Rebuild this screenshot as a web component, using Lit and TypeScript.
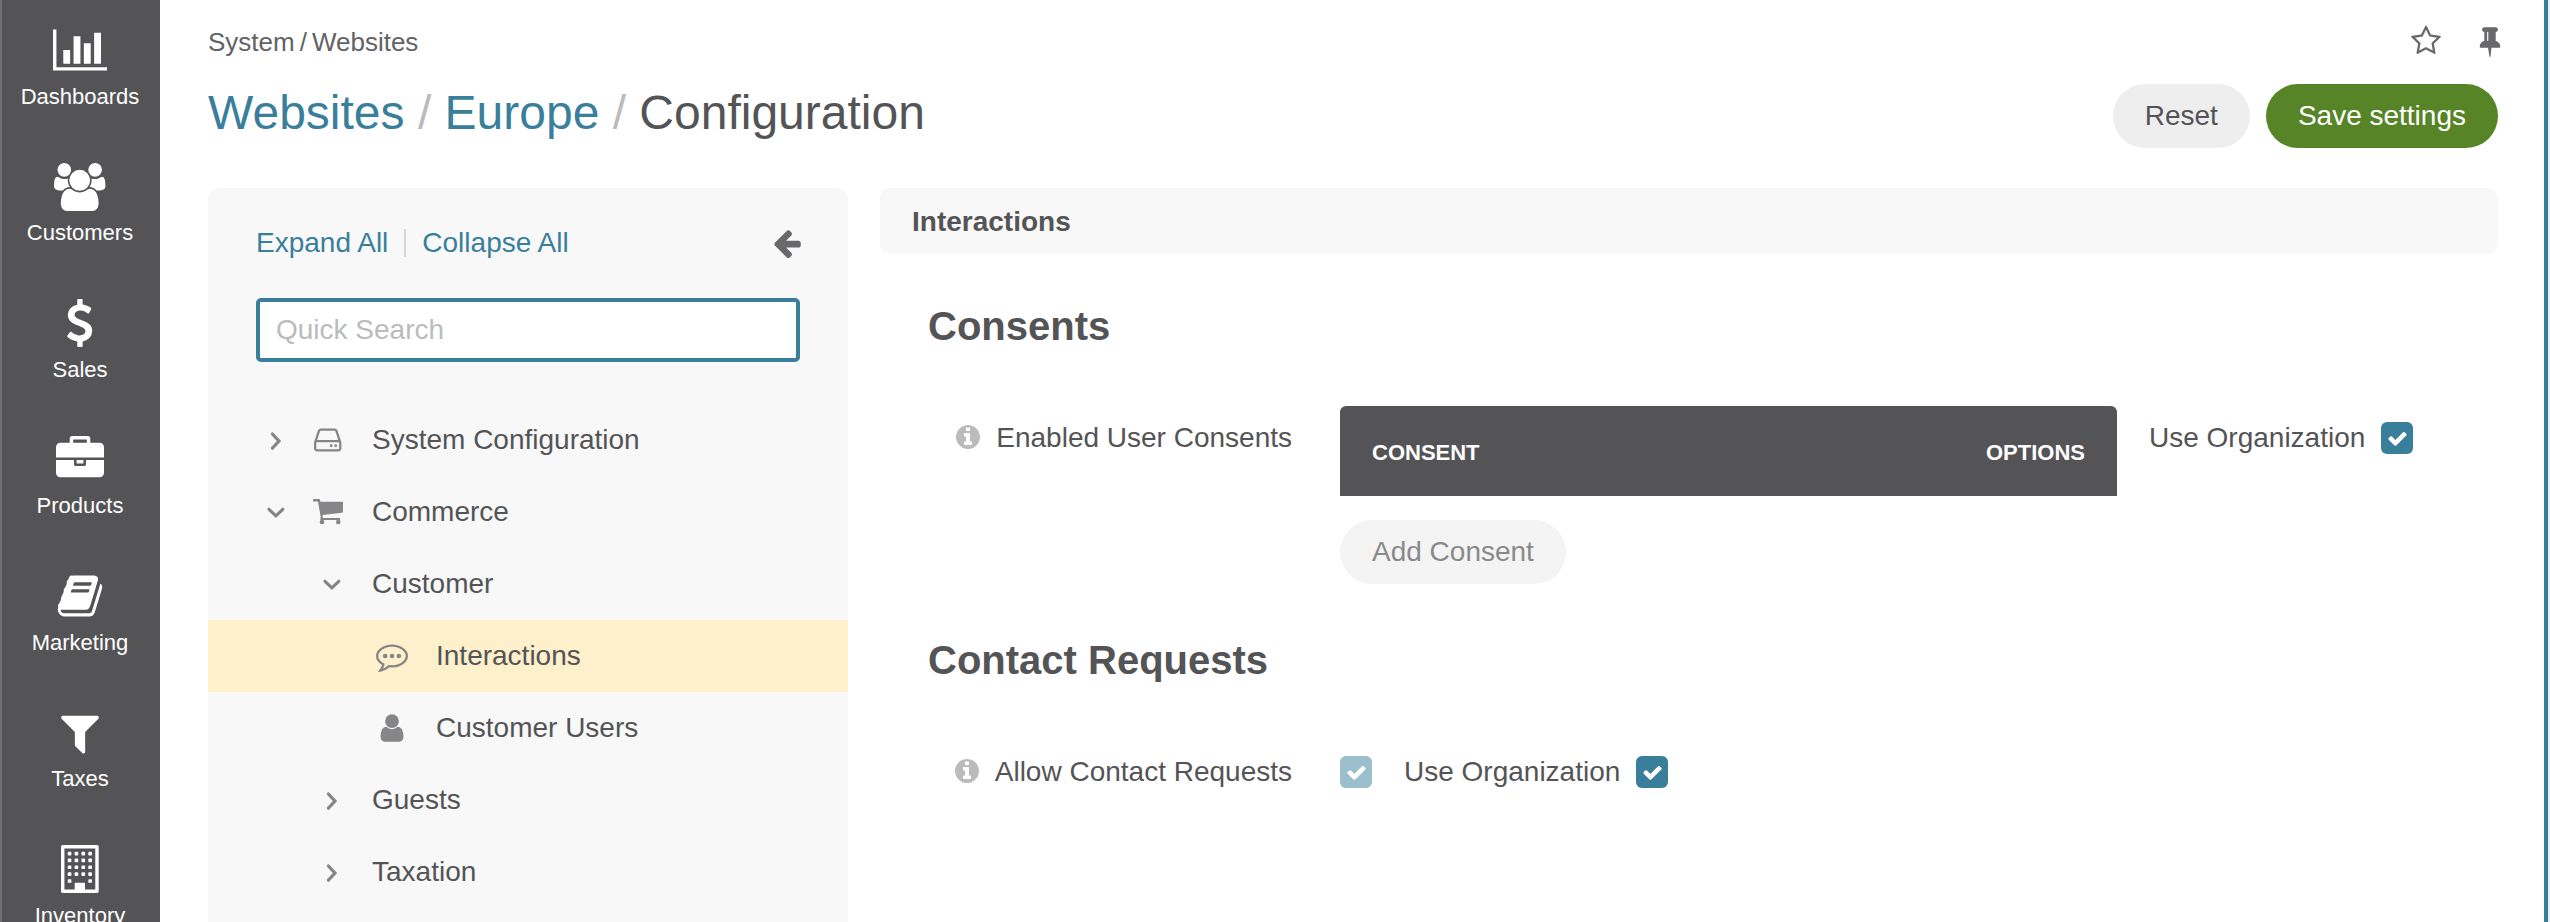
import { LitElement, html, css, svg } from "lit";
import { customElement, property } from "lit/decorators.js";
import { classMap } from "lit/directives/class-map.js";

const windows = [0, 1, 2, 3, 4].flatMap((r) =>
  [0, 1, 2, 3]
    .filter((c) => r < 4 || c === 0 || c === 3)
    .map((c) => svg`<rect x=${252 + c * 256} y=${252 + r * 256} width="136" height="136" rx="34"/>`)
);

// Each glyph: [viewBox width, viewBox height, content]; 1792 units equal one em.
const glyphs: Record<string, [number, number, unknown]> = {
  chart: [2048, 1792, svg`<path d="M640 896v512h-256v-512h256zm384-512v1024h-256v-1024h256zm1024 1152v128h-2048v-1536h128v1408h1920zm-640-896v768h-256v-768h256zm384-384v1152h-256v-1152h256z"/>`],
  users: [1920, 1792, svg`<circle cx="384" cy="256" r="256"/><circle cx="1536" cy="256" r="256"/><circle cx="960" cy="646" r="390"/><path d="M593 896q-162 5-265 128h-134q-82 0-138-40.500t-56-118.500q0-353 124-353 6 0 43.500 21t97.500 42.500 119 21.500q67 0 133-23-5 37-5 66 0 139 81 256z"/><path d="M1664 1533q0 120-73 189.500t-194 69.500h-874q-121 0-194-69.500t-73-189.500q0-53 3.500-103.500t14-109 26.500-108.500 43-97.500 62-81 85.500-53.500 111.500-20q10 0 43 21.500t73 48 107 48 135 21.500 135-21.500 107-48 73-48 43-21.500q61 0 111.500 20t85.500 53.500 62 81 43 97.500 26.500 108.500 14 109 3.500 103.500z"/><path d="M1920 865q0 78-56 118.500t-138 40.500h-134q-103-123-265-128 81-117 81-256 0-29-5-66 66 23 133 23 59 0 119-21.500t97.500-42.500 43.500-21q124 0 124 353z"/>`],
  dollar: [1024, 1792, svg`<path d="M978 1185q0 153-99.500 263.500t-258.500 136.500v175q0 14-9 23t-23 9h-135q-13 0-22.500-9.500t-9.500-22.500v-175q-66-9-127.500-31t-101.500-44.500-74-48-46.500-37.500-17.500-18q-17-21-2-41l103-135q7-10 23-12 15-2 24 9l2 2q113 99 243 125 37 8 74 8 81 0 142.500-43t61.500-122q0-28-15-53t-33.500-42-58.500-37.500-66-32-80-32.500q-39-16-61.500-25t-61.500-26.500-62.500-31-56.500-35.500-53.500-42.500-43.500-49-35.500-58-21-66.500-8.500-78q0-138 98-242t255-134v-180q0-13 9.500-22.500t22.500-9.500h135q14 0 23 9t9 23v176q57 6 110.500 23t87 33.500 63.500 37.500 39 29 15 14q17 18 5 38l-81 146q-8 15-23 16-14 3-27-7-3-3-14.500-12t-39-26.500-58.500-32-74.500-26-85.500-11.500q-95 0-155 43t-60 111q0 26 8.500 48t29.500 41.500 39.500 33 56 31 60.500 27 70 27.500q53 20 81 31.500t76 35 75.500 42.500 62 50 53 63.500 31.500 76.500 13 94z"/>`],
  briefcase: [1792, 1792, svg`<path d="M640 256h512v-128h-512v128zm1152 640v480q0 66-47 113t-113 47h-1472q-66 0-113-47t-47-113v-480h672v160q0 26 19 45t45 19h320q26 0 45-19t19-45v-160h672zm-768 0v128h-256v-128h256zm768-480v384h-1792v-384q0-66 47-113t113-47h352v-160q0-40 28-68t68-28h576q40 0 68 28t28 68v160h352q66 0 113 47t47 113z"/>`],
  book: [1792, 1792, svg`<path d="M1703 478q40 57 18 129l-275 906q-19 64-76.500 107.500t-122.500 43.500h-923q-77 0-148.500-53.500t-99.500-131.500q-24-67-2-127 0-4 3-27t4-37q1-8-3-21.500t-3-19.500q2-11 8-21t16.500-23.500 16.500-23.500q23-38 45-91.500t30-91.500q3-10 .5-30t-.5-28q3-11 17-28t17-23q21-36 42-92t25-90q1-9-2.500-32t.5-28q4-13 22-30.500t22-22.500q19-26 42.500-84.500t27.500-96.500q1-8-3-25.500t-2-26.500q2-8 9-18t18-23 17-21q8-12 16.500-30.500t15-35 16-36 19.500-32 26.500-23.500 36-11.500 47.500 5.500l-1 3q38-9 51-9h761q74 0 114 56t18 130l-274 906q-36 119-71.500 153.500t-128.500 34.500h-869q-27 0-38 15-11 16-1 43 24 70 144 70h923q29 0 56-15.500t35-41.500l300-987q7-22 5-57 38 15 59 43zm-1064 2q-4 13 2 22.500t20 9.500h608q13 0 25.500-9.500t16.500-22.500l21-64q4-13-2-22.500t-20-9.500h-608q-13 0-25.500 9.500t-16.500 22.500zm-83 256q-4 13 2 22.500t20 9.500h608q13 0 25.500-9.500t16.500-22.500l21-64q4-13-2-22.500t-20-9.500h-608q-13 0-25.500 9.500t-16.500 22.500z"/>`],
  filter: [1792, 1792, svg`<path d="M1595 295q17 41-14 70l-493 493v742q0 42-39 59-13 5-25 5-27 0-45-19l-256-256q-19-19-19-45v-486l-493-493q-31-29-14-70 17-39 59-39h1280q42 0 59 39z"/>`],
  building: [1408, 1792, svg`<path fill-rule="evenodd" d="M64 0h1280q64 0 64 64v1664q0 64-64 64h-1280q-64 0-64-64v-1664q0-64 64-64zM128 128v1536h384v-224q0-32 32-32h320q32 0 32 32v224h384v-1536z"/>${windows}`],
  star: [1792, 1792, svg`<path d="M1201 1004l306-297-422-62-189-382-189 382-422 62 306 297-73 421 378-199 377 199zm527-357q0 22-26 48l-363 354 86 500q1 7 1 20 0 50-41 50-19 0-40-12l-449-236-449 236q-22 12-40 12-21 0-31.500-14.500t-10.500-35.500q0-6 2-20l86-500-364-354q-25-27-25-48 0-37 56-46l502-73 225-455q19-41 49-41t49 41l225 455 502 73q56 9 56 46z"/>`],
  pin: [1792, 1792, svg`<path d="M800 864v-448q0-14-9-23t-23-9-23 9-9 23v448q0 14 9 23t23 9 23-9 9-23zm672 352q0 26-19 45t-45 19h-429l-51 483q-2 12-10.500 20.500t-20.500 8.500h-1q-27 0-32-27l-76-485h-404q-26 0-45-19t-19-45q0-123 78.500-221.500t177.500-98.500v-512q-52 0-90-38t-38-90 38-90 90-38h640q52 0 90 38t38 90-38 90-90 38v512q99 0 177.500 98.500t78.500 221.500z"/>`],
  back: [1792, 1792, svg`<path d="M1664 896v128q0 53-32.500 90.500t-84.500 37.500h-704l293 294q38 36 38 90t-38 90l-75 76q-37 37-90 37-52 0-91-37l-651-652q-37-37-37-90 0-52 37-91l651-650q38-38 91-38 52 0 90 38l75 74q38 38 38 91t-38 91l-293 293h704q52 0 84.500 37.500t32.500 90.500z"/>`],
  right: [32, 32, svg`<path d="M12.400 10L19 17.100L12.400 24.200" fill="none" stroke="currentColor" stroke-width="3.200" stroke-linecap="round"/>`],
  down: [32, 32, svg`<path d="M9 13.300L15.900 19.900L22.800 13.300" fill="none" stroke="currentColor" stroke-width="3.200" stroke-linecap="round"/>`],
  disk: [1536, 1792, svg`<circle cx="960" cy="1216" r="80"/><circle cx="1216" cy="1216" r="80"/><path d="M1408 1376v-320q0-13-9.500-22.500t-22.500-9.500h-1216q-13 0-22.500 9.500t-9.500 22.500v320q0 13 9.500 22.500t22.500 9.500h1216q13 0 22.500-9.500t9.500-22.500zm-1230-480h1180l-157-482q-4-13-16-21.500t-26-8.500h-782q-14 0-26 8.500t-16 21.500zm1358 160v320q0 66-47 113t-113 47h-1216q-66 0-113-47t-47-113v-320q0-25 16-75l197-606q17-53 63-86t101-33h782q55 0 101 33t63 86l197 606q16 50 16 75z"/>`],
  cart: [30, 32, svg`<path d="M0.700 3H6.600L7.400 5.700H29.300Q30 5.700 30 6.400V15.500Q30 16.600 29 16.700L9.500 19.100L9.900 22H27V24H8.200Q7 24 7.200 22.900L7.700 21L5 5.500H0.700Q0 5.500 0 4.200Q0 3 0.700 3Z"/><circle cx="9" cy="26" r="2.300"/><circle cx="25.300" cy="26" r="2.300"/>`],
  comment: [1792, 1792, svg`<circle cx="512" cy="896" r="128"/><circle cx="896" cy="896" r="128"/><circle cx="1280" cy="896" r="128"/><path d="M896 384q-204 0-381.500 69.500t-282 187.500-104.500 255q0 112 71.500 213.500t201.500 175.500l87 50-27 96q-24 91-70 172 152-63 275-171l43-38 57 6q69 8 130 8 204 0 381.500-69.500t282-187.500 104.500-255-104.500-255-282-187.500-381.500-69.500zm896 512q0 174-120 321.500t-326 233-450 85.500q-70 0-145-8-198 175-460 242-49 14-114 22h-5q-15 0-27-10.500t-16-27.500v-1q-3-4-.5-12t2-10 4.500-9.500l6-9 7-8.500 8-9q7-8 31-34.500t34.500-38 31-39.500 32.500-51 27-59 26-76q-157-89-247.500-220t-90.500-281q0-130 71-248.500t191-204.500 286-136.500 348-50.500 348 50.500 286 136.500 191 204.500 71 248.500z"/>`],
  user: [1792, 1792, svg`<path d="M1536 1399q0 109-62.500 187t-150.500 78h-854q-88 0-150.500-78t-62.500-187q0-85 8.500-160.500t31.500-152 58.500-131 94-89 134.500-34.500q131 128 313 128t313-128q76 0 134.500 34.500t94 89 58.500 131 31.500 152 8.500 160.500zm-256-887q0 159-112.500 271.500t-271.500 112.500-271.500-112.500-112.500-271.500 112.500-271.500 271.500-112.500 271.500 112.500 112.500 271.500z"/>`],
  info: [1536, 1536, svg`<path transform="translate(-128 -128)" d="M1152 1376v-160q0-14-9-23t-23-9h-96v-512q0-14-9-23t-23-9h-320q-14 0-23 9t-9 23v160q0 14 9 23t23 9h96v320h-96q-14 0-23 9t-9 23v160q0 14 9 23t23 9h448q14 0 23-9t9-23zm-128-896v-160q0-14-9-23t-23-9h-192q-14 0-23 9t-9 23v160q0 14 9 23t23 9h192q14 0 23-9t9-23zm640 416q0 209-103 385.500t-279.500 279.500-385.500 103-385.500-103-279.500-279.500-103-385.500 103-385.500 279.500-279.500 385.500-103 385.500 103 279.500 279.500 103 385.500z"/>`],
  check: [1792, 1792, svg`<path d="M1671 566q0 40-28 68l-724 724-136 136q-28 28-68 28t-68-28l-136-136-362-362q-28-28-28-68t28-68l136-136q28-28 68-28t68 28l294 295 656-657q28-28 68-28t68 28l136 136q28 28 28 68z"/>`],
};

@customElement("ui-icon")
class UiIcon extends LitElement {
  @property() name = "";
  static styles = css`
    :host {
      display: inline-flex;
      flex: none;
      height: 32px;
    }
    .glyph {
      display: block;
      height: 100%;
      width: auto;
      fill: currentColor;
    }
  `;
  render() {
    const [w, h, body] = glyphs[this.name];
    return html`<svg class="glyph" viewBox="0 0 ${w} ${h}">${body}</svg>`;
  }
}

@customElement("check-box")
class CheckBox extends LitElement {
  @property({ type: Boolean }) disabled = false;
  static styles = css`
    .box {
      display: flex;
      align-items: center;
      justify-content: center;
      width: 32px;
      height: 32px;
      border-radius: 6px;
      background: #397f9c;
      color: #fff;
    }
    .disabled {
      background: #9cbfcd;
    }
    .tick {
      height: 21px;
    }
  `;
  render() {
    return html`<div class=${classMap({ box: true, disabled: this.disabled })}>
      <ui-icon class="tick" name="check"></ui-icon>
    </div>`;
  }
}

@customElement("main-menu")
class MainMenu extends LitElement {
  static styles = css`
    .menu {
      box-sizing: border-box;
      width: 160px;
      height: 922px;
      padding: 26px 2px 0 0;
      border-left: 2px solid #6f6f71;
      background: #545456;
      overflow: hidden;
    }
    .item {
      display: flex;
      flex-direction: column;
      align-items: center;
      height: 136.5px;
      color: #fff;
      font-size: 22px;
      line-height: 26px;
    }
    .pic {
      height: 48px;
      margin-bottom: 9.7px;
    }
  `;
  items = [
    ["chart", "Dashboards"],
    ["users", "Customers"],
    ["dollar", "Sales"],
    ["briefcase", "Products"],
    ["book", "Marketing"],
    ["filter", "Taxes"],
    ["building", "Inventory"],
  ];
  render() {
    return html`<nav class="menu">
      ${this.items.map(
        ([icon, label]) => html`<div class="item">
          <ui-icon class="pic" name=${icon}></ui-icon><span>${label}</span>
        </div>`
      )}
    </nav>`;
  }
}

interface Row {
  label: string;
  level: number;
  toggle?: string;
  icon?: string;
  active?: boolean;
}

@customElement("config-tree")
class ConfigTree extends LitElement {
  static styles = css`
    :host {
      display: block;
      height: 734px;
    }
    .panel {
      height: 100%;
      box-sizing: border-box;
      padding-top: 39px;
      border-radius: 12px 12px 0 0;
      background: #f8f8f8;
    }
    .tools {
      display: flex;
      align-items: center;
      height: 32px;
      padding: 0 45px 0 48px;
      color: #397f9c;
    }
    .divider {
      width: 2px;
      height: 28px;
      margin: 0 16px;
      background: #d6d6d6;
    }
    .back {
      margin-left: auto;
      color: #69696b;
    }
    .search {
      box-sizing: border-box;
      display: block;
      width: 544px;
      height: 64px;
      margin: 39px 48px 42px;
      padding: 0 16px 1px;
      border: 4px solid #397f9c;
      border-radius: 5px;
      outline: none;
      background: #fff;
      font: inherit;
    }
    .search::placeholder {
      color: #bbb;
      opacity: 1;
    }
    .row {
      display: flex;
      align-items: center;
      height: 72px;
      color: #545456;
    }
    .active {
      background: #fdf0cb;
    }
    .toggle,
    .icon {
      display: flex;
      justify-content: center;
      color: #868688;
    }
    .toggle {
      width: 32px;
    }
    .l1 {
      padding-left: 52px;
    }
    .l1 .icon {
      width: 30px;
      margin: 0 29px 0 21px;
    }
    .l2 {
      padding-left: 108px;
    }
    .l2 .toggle {
      margin-right: 24px;
    }
    .l3 {
      padding-left: 168px;
    }
    .l3 .icon {
      width: 32px;
      margin-right: 28px;
    }
  `;
  rows: Row[] = [
    { label: "System Configuration", level: 1, toggle: "right", icon: "disk" },
    { label: "Commerce", level: 1, toggle: "down", icon: "cart" },
    { label: "Customer", level: 2, toggle: "down" },
    { label: "Interactions", level: 3, icon: "comment", active: true },
    { label: "Customer Users", level: 3, icon: "user" },
    { label: "Guests", level: 2, toggle: "right" },
    { label: "Taxation", level: 2, toggle: "right" },
  ];
  render() {
    return html`<aside class="panel">
      <div class="tools">
        <span>Expand All</span><span class="divider"></span><span>Collapse All</span>
        <ui-icon class="back" name="back"></ui-icon>
      </div>
      <input class="search" placeholder="Quick Search" />
      ${this.rows.map(
        (r) => html`<div class=${classMap({ row: true, active: !!r.active, ["l" + r.level]: true })}>
          ${r.toggle ? html`<span class="toggle"><ui-icon name=${r.toggle}></ui-icon></span>` : ""}
          ${r.icon ? html`<span class="icon"><ui-icon name=${r.icon}></ui-icon></span>` : ""}
          <span>${r.label}</span>
        </div>`
      )}
    </aside>`;
  }
}

@customElement("config-form")
class ConfigForm extends LitElement {
  static styles = css`
    .bar {
      height: 66px;
      box-sizing: border-box;
      padding: 1px 32px 0;
      border-radius: 10px;
      background: #f8f8f8;
      font-weight: bold;
      line-height: 66px;
    }
    .section {
      padding-left: 48px;
    }
    .heading {
      margin: 0;
      font-size: 40px;
      line-height: 48px;
      font-weight: bold;
    }
    .first {
      padding-top: 48px;
    }
    .second {
      padding-top: 52px;
    }
    .field {
      display: grid;
      grid-template-columns: 364px auto auto;
      justify-content: start;
      align-items: start;
    }
    .label {
      display: flex;
      align-items: center;
      justify-content: flex-end;
      gap: 16px;
      height: 32px;
    }
    .hint {
      height: 24px;
      margin-top: -2px;
      color: #bbb;
    }
    .consents {
      margin-top: 56px;
    }
    .consents .label {
      margin-top: 16px;
    }
    .requests {
      margin-top: 72px;
    }
    .control {
      margin-left: 48px;
    }
    .table {
      box-sizing: border-box;
      display: flex;
      justify-content: space-between;
      align-items: center;
      width: 777px;
      height: 90px;
      padding: 4px 32px 0;
      border-radius: 6px 6px 0 0;
      background: #545456;
      color: #fff;
      font-size: 22px;
      font-weight: bold;
    }
    .add {
      display: inline-block;
      height: 63px;
      margin-top: 24px;
      padding: 0 32px 1px;
      border-radius: 32px;
      background: #f4f4f4;
      color: #8a8a8a;
      line-height: 63px;
    }
    .inherit {
      display: flex;
      align-items: center;
      gap: 16px;
      height: 32px;
      margin-left: 32px;
    }
    .consents .inherit {
      margin-top: 16px;
    }
  `;
  render() {
    return html`<div class="bar">Interactions</div>
      <section class="section first">
        <h2 class="heading">Consents</h2>
        <div class="field consents">
          <div class="label"><ui-icon class="hint" name="info"></ui-icon>Enabled User Consents</div>
          <div class="control">
            <div class="table"><span>CONSENT</span><span>OPTIONS</span></div>
            <span class="add">Add Consent</span>
          </div>
          <div class="inherit">Use Organization<check-box></check-box></div>
        </div>
      </section>
      <section class="section second">
        <h2 class="heading">Contact Requests</h2>
        <div class="field requests">
          <div class="label"><ui-icon class="hint" name="info"></ui-icon>Allow Contact Requests</div>
          <div class="control"><check-box disabled></check-box></div>
          <div class="inherit">Use Organization<check-box></check-box></div>
        </div>
      </section>`;
  }
}

@customElement("app-root")
class AppRoot extends LitElement {
  static styles = css`
    :host {
      display: block;
      font-family: "Liberation Sans", Arial, sans-serif;
      font-size: 28px;
      line-height: 32px;
      color: #545456;
    }
    .app {
      box-sizing: border-box;
      display: grid;
      grid-template-columns: 160px 1fr;
      height: 922px;
      overflow: hidden;
      border-right: 2px solid #ececec;
      background: #fff;
    }
    .page {
      box-sizing: border-box;
      padding: 25px 46px 0 48px;
      border-right: 4px solid #397f9c;
    }
    .top {
      display: flex;
      justify-content: space-between;
      height: 59px;
    }
    .crumbs {
      display: flex;
      gap: 5px;
      padding-top: 2px;
      color: #626264;
      font-size: 26px;
      line-height: 30px;
    }
    .marks {
      display: flex;
      gap: 32px;
      margin-right: -8px;
      color: #69696b;
    }
    .head {
      display: flex;
      gap: 16px;
      height: 104px;
    }
    .title {
      flex: 1;
      margin: 0;
      padding-top: 1px;
      font-size: 48px;
      font-weight: normal;
      line-height: 56px;
    }
    .link {
      color: #397f9c;
    }
    .slash {
      color: #bbb;
    }
    .button {
      height: 63px;
      padding: 0 32px 1px;
      border-radius: 32px;
      background: #eee;
      line-height: 63px;
    }
    .primary {
      background: #568427;
      color: #fff;
    }
    .body {
      display: grid;
      grid-template-columns: 640px 1fr;
      gap: 32px;
    }
  `;
  render() {
    return html`<div class="app">
      <main-menu></main-menu>
      <main class="page">
        <div class="top">
          <div class="crumbs"><span>System</span><span>/</span><span>Websites</span></div>
          <div class="marks"><ui-icon name="star"></ui-icon><ui-icon name="pin"></ui-icon></div>
        </div>
        <div class="head">
          <h1 class="title">
            <span class="link">Websites</span> <span class="slash">/</span>
            <span class="link">Europe</span> <span class="slash">/</span> Configuration
          </h1>
          <span class="button">Reset</span>
          <span class="button primary">Save settings</span>
        </div>
        <div class="body">
          <config-tree></config-tree>
          <config-form></config-form>
        </div>
      </main>
    </div>`;
  }
}
